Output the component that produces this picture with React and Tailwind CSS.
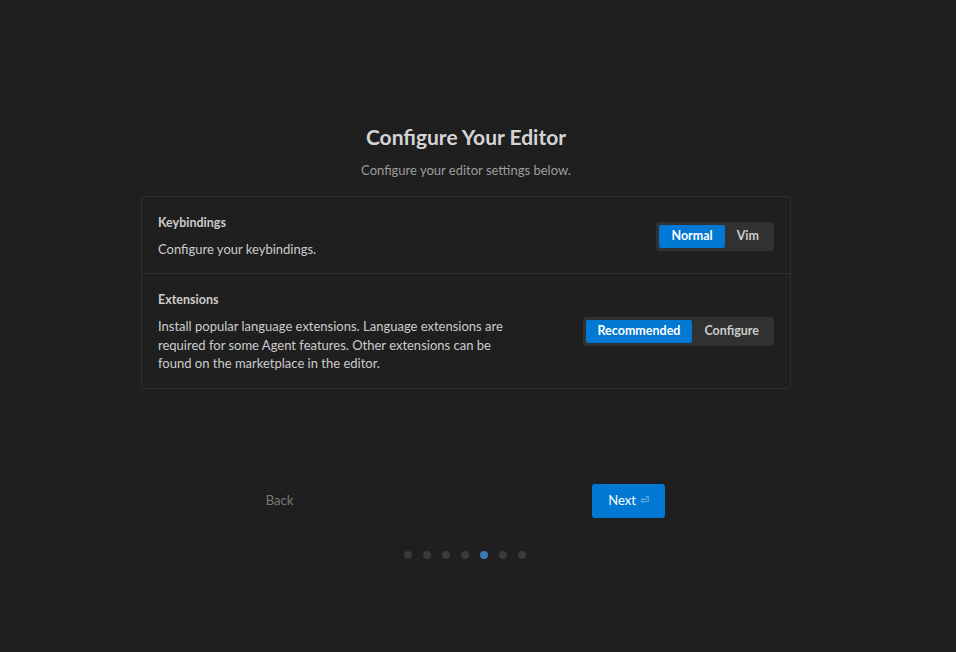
import React, { useState } from 'react';

function Segmented({ options, value, onChange }) {
  return (
    <div className="flex rounded-[4px] bg-[#313131] p-[3px]">
      {options.map((o) => (
        <button
          key={o}
          onClick={() => onChange(o)}
          className={`h-[23px] rounded-[2px] px-[12px] text-[12.5px] font-bold ${value === o ? 'bg-[#0078d4] text-white' : 'text-[#cccccc]'}`}
        >
          {o}
        </button>
      ))}
    </div>
  );
}

export default function App() {
  const [keys, setKeys] = useState('Normal');
  const [ext, setExt] = useState('Recommended');
  const step = 4;

  return (
    <div className="flex h-[652px] w-full justify-center bg-[#1f1f1f] pr-6 font-['Lato',sans-serif] text-[#cccccc]">
      <div className="flex w-[650px] flex-col items-center pt-[123px]">
        <h1 className="text-[21px] font-bold leading-[27px] text-[#d4d4d4]">Configure Your Editor</h1>
        <p className="mt-[11px] text-[13px] leading-[18px] text-[#9d9d9d]">Configure your editor settings below.</p>

        <div className="mt-[17px] w-full rounded-[4px] border border-[#2f2f2f] bg-[#1f1f1f]">
          <div className="flex items-center justify-between border-b border-[#2f2f2f] px-4 pt-[17px] pb-[15px]">
            <div>
              <p className="text-[12.5px] font-bold leading-[18px] text-[#cccccc]">Keybindings</p>
              <p className="mt-[8px] text-[13px] leading-[18px] text-[#cccccc]">Configure your keybindings.</p>
            </div>
            <Segmented options={['Normal', 'Vim']} value={keys} onChange={setKeys} />
          </div>
          <div className="flex items-center justify-between px-4 pt-[17px] pb-[15px]">
            <div>
              <p className="text-[12.5px] font-bold leading-[18px] text-[#cccccc]">Extensions</p>
              <p className="mt-[8px] w-[360px] text-[13px] leading-[18.5px] text-[#cccccc]">
                Install popular language extensions. Language extensions are required for some Agent features. Other extensions can be found on the marketplace in the editor.
              </p>
            </div>
            <Segmented options={['Recommended', 'Configure']} value={ext} onChange={setExt} />
          </div>
        </div>

        <div className="mt-[95px] flex w-full items-center pl-[102px]">
          <button className="h-[34px] w-[73px] text-[13px] text-[#7a7a7a]">Back</button>
          <button className="ml-[276px] flex h-[34px] w-[73px] items-center justify-center gap-1 rounded-[3px] bg-[#0078d4] text-[13px] text-white">
            Next <span className="text-[11px] text-[#9fc6ec]">⏎</span>
          </button>
        </div>

        <div className="mt-[33px] flex gap-[11px] pr-[2px]">
          {[0, 1, 2, 3, 4, 5, 6].map((i) => (
            <span key={i} className={`size-[8px] rounded-full ${i === step ? 'bg-[#3b78b5]' : 'bg-[#3a3a3a]'}`} />
          ))}
        </div>
      </div>
    </div>
  );
}
